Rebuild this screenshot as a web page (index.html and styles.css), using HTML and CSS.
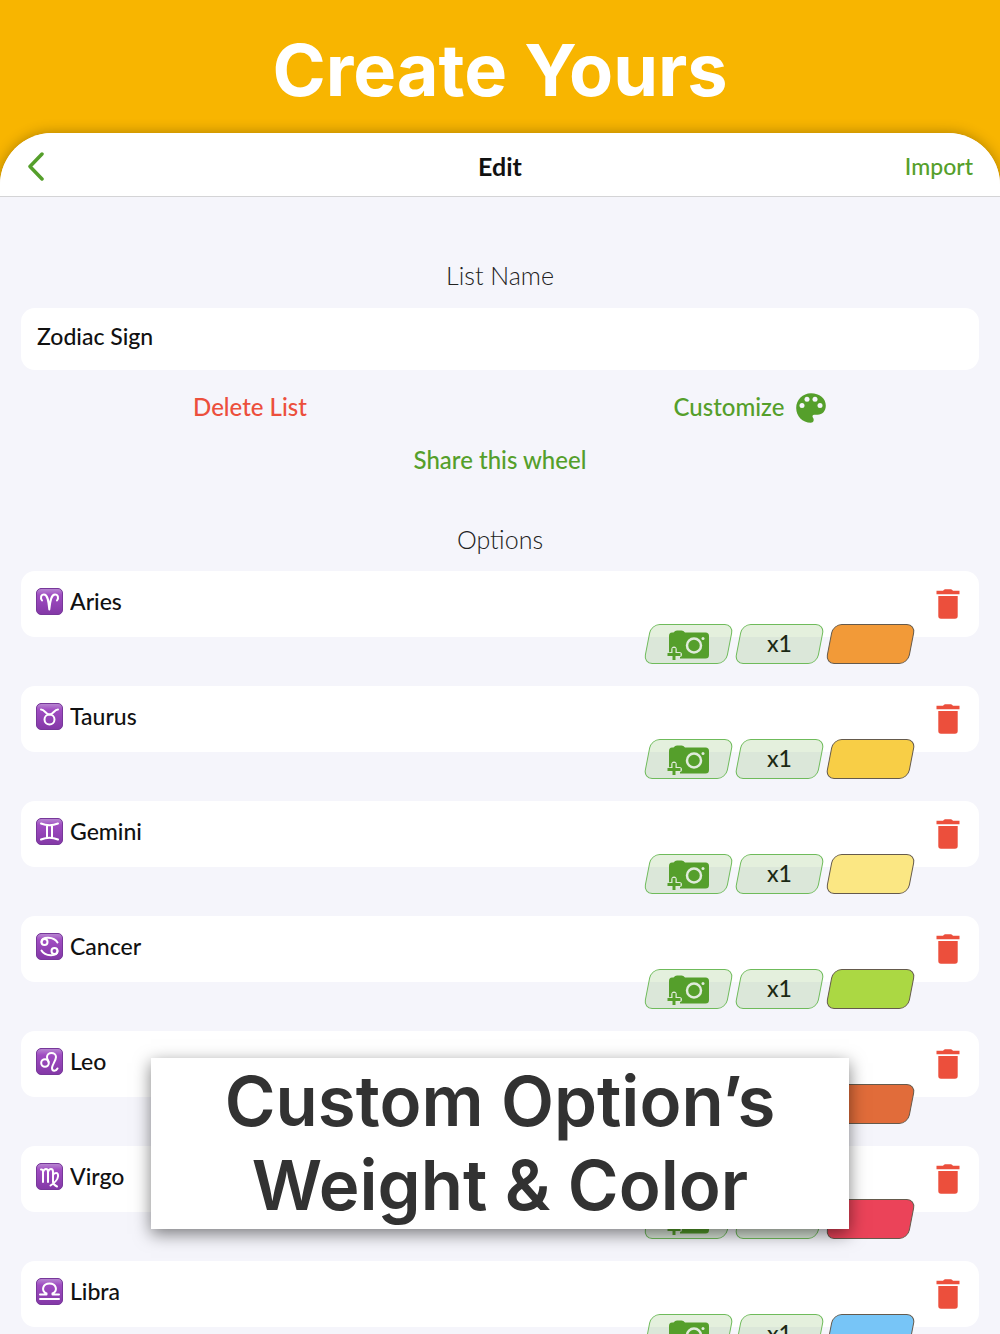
FILE: index.html
```html
<!DOCTYPE html>
<html lang="en">
<head>
    <meta charset="UTF-8">
    <meta name="viewport" content="width=device-width, initial-scale=1.0">
    <title>Edit</title>
    <link rel="stylesheet" href="styles.css">
</head>
<body>
    <!-- shared icons -->
    <svg class="sprite" aria-hidden="true">
        <defs>
            <linearGradient id="purple" x1="0" y1="0" x2="0" y2="1">
                <stop offset="0" stop-color="#b98bd2"/>
                <stop offset="0.25" stop-color="#a04cc2"/>
                <stop offset="1" stop-color="#8338a6"/>
            </linearGradient>
        </defs>
        <symbol id="tile" viewBox="0 0 27 27">
            <rect x="0.5" y="0.5" width="26" height="26" rx="4.5" fill="url(#purple)" stroke="#77389a" stroke-width="1"/>
        </symbol>
        <symbol id="camera" viewBox="0 0 42 30">
            <path fill="#559f2b" d="M5 2.500 H6.500 Q8 .5 10 .5 H14.500 Q16.500 .5 18 2.500 H38.500 Q42 2.500 42 6 V25 Q42 28.500 38.500 28.500 H13 V22.500 H9.500 V18.500 H4.500 V22.500 H2 V6 Q2 2.500 5 2.500Z"/>
            <circle cx="27" cy="15.500" r="7" fill="none" stroke="#e0ebdb" stroke-width="2.500"/>
            <circle cx="36" cy="8.500" r="1.500" fill="#e0ebdb"/>
            <path fill="none" stroke="#e0ebdb" stroke-width="5" stroke-linecap="round" d="M7 19 V27 M4 24.500 H12.500"/>
            <path fill="none" stroke="#559f2b" stroke-width="3" d="M7 18 V30 M0.500 24.500 H13.500"/>
        </symbol>
        <symbol id="trash" viewBox="0 0 24 30">
            <path fill="#ec4f3c" d="M.5 1.800 H7 Q8 .3 9 .3 H15 Q16 .3 17 1.800 H23.500 V5.300 H.5Z M2.300 7 H21.700 V27 Q21.700 29.800 19 29.800 H5 Q2.300 29.800 2.300 27Z"/>
        </symbol>
    </svg>

    <header class="hero">
        <h1>Create Yours</h1>
    </header>

    <main class="screen">
        <nav class="navbar">
            <button class="back" type="button" aria-label="Back">
                <svg width="18" height="30" viewBox="0 0 18 30"><path d="M15 3 L3 15.500 L15 28" fill="none" stroke="#559f2b" stroke-width="3.500" stroke-linecap="round" stroke-linejoin="round"/></svg>
            </button>
            <h2>Edit</h2>
            <button class="import" type="button">Import</button>
        </nav>

        <section class="list-name">
            <label class="section-title" for="listName">List Name</label>
            <input class="name-input" id="listName" type="text" value="Zodiac Sign">
            <div class="actions">
                <button class="delete-list" type="button">Delete List</button>
                <button class="customize" type="button">
                    Customize
                    <svg width="30" height="30" viewBox="0 0 30 30">
                        <path fill="#559f2b" d="M15 .3 C23.500 .3 29.800 5.500 29.800 12.500 C29.800 18 26.500 21.700 21.500 21.700 H18.200 C16.500 21.700 16 23.300 17 24.700 C18.400 26.600 17.700 29.700 14.800 29.700 C6.500 29.700 .2 23.300 .2 15 C.2 6.700 6.800 .3 15 .3Z"/>
                        <g fill="#f5f5fb"><circle cx="6" cy="12.500" r="2.500"/><circle cx="11" cy="6.300" r="2.500"/><circle cx="19" cy="6.300" r="2.500"/><circle cx="24" cy="12.500" r="2.500"/></g>
                    </svg>
                </button>
            </div>
            <button class="share" type="button">Share this wheel</button>
        </section>

        <section>
            <h3 class="section-title">Options</h3>
            <ul class="options">
                <li>
                    <div class="card">
                        <svg class="sign" viewBox="0 0 27 27"><use href="#tile"/><path d="M6 12.500 C4 10 5 6.500 8 6.500 C12 6.500 12.500 14 13.300 21.500 C14 14 15 6.500 19 6.500 C22 6.500 23 10 21 12.500"/></svg>
                        <input type="text" value="Aries" aria-label="Option 1">
                        <button class="trash" type="button" aria-label="Delete Aries"><svg viewBox="0 0 24 30"><use href="#trash"/></svg></button>
                    </div>
                    <div class="tools">
                        <button type="button" aria-label="Add photo"><svg viewBox="0 0 42 30"><use href="#camera"/></svg></button>
                        <button type="button">x1</button>
                        <button class="color orange" type="button" aria-label="Color"></button>
                    </div>
                </li>
                <li>
                    <div class="card">
                        <svg class="sign" viewBox="0 0 27 27"><use href="#tile"/><path d="M5 6.500 C9 6.500 9.500 11.500 13.500 11.500 C17.500 11.500 18 6.500 22 6.500"/><circle cx="13.500" cy="16.500" r="5"/></svg>
                        <input type="text" value="Taurus" aria-label="Option 2">
                        <button class="trash" type="button" aria-label="Delete Taurus"><svg viewBox="0 0 24 30"><use href="#trash"/></svg></button>
                    </div>
                    <div class="tools">
                        <button type="button" aria-label="Add photo"><svg viewBox="0 0 42 30"><use href="#camera"/></svg></button>
                        <button type="button">x1</button>
                        <button class="color yellow" type="button" aria-label="Color"></button>
                    </div>
                </li>
                <li>
                    <div class="card">
                        <svg class="sign" viewBox="0 0 27 27"><use href="#tile"/><path d="M5 5.500 Q13.500 9 22 5.500 M5 21.500 Q13.500 18 22 21.500 M11 7.500 V19.500 M16 7.500 V19.500"/></svg>
                        <input type="text" value="Gemini" aria-label="Option 3">
                        <button class="trash" type="button" aria-label="Delete Gemini"><svg viewBox="0 0 24 30"><use href="#trash"/></svg></button>
                    </div>
                    <div class="tools">
                        <button type="button" aria-label="Add photo"><svg viewBox="0 0 42 30"><use href="#camera"/></svg></button>
                        <button type="button">x1</button>
                        <button class="color cream" type="button" aria-label="Color"></button>
                    </div>
                </li>
                <li>
                    <div class="card">
                        <svg class="sign" viewBox="0 0 27 27"><use href="#tile"/><circle cx="8.500" cy="9" r="3"/><circle cx="18.500" cy="18" r="3"/><path d="M5.500 9 C6 3 18 3.500 21.500 9.500 M21.500 18 C21 24 9 23.500 5.500 17.500"/></svg>
                        <input type="text" value="Cancer" aria-label="Option 4">
                        <button class="trash" type="button" aria-label="Delete Cancer"><svg viewBox="0 0 24 30"><use href="#trash"/></svg></button>
                    </div>
                    <div class="tools">
                        <button type="button" aria-label="Add photo"><svg viewBox="0 0 42 30"><use href="#camera"/></svg></button>
                        <button type="button">x1</button>
                        <button class="color green" type="button" aria-label="Color"></button>
                    </div>
                </li>
                <li>
                    <div class="card">
                        <svg class="sign" viewBox="0 0 27 27"><use href="#tile"/><circle cx="9" cy="15" r="3.800"/><path d="M12.500 14 C12 12 11 11 11 9 C11 3.500 20 3.500 20 9 C20 12.500 16 17 16 20 C16 23.500 20 23.500 21.500 20.500"/></svg>
                        <input type="text" value="Leo" aria-label="Option 5">
                        <button class="trash" type="button" aria-label="Delete Leo"><svg viewBox="0 0 24 30"><use href="#trash"/></svg></button>
                    </div>
                    <div class="tools">
                        <button type="button" aria-label="Add photo"><svg viewBox="0 0 42 30"><use href="#camera"/></svg></button>
                        <button type="button">x1</button>
                        <button class="color rust" type="button" aria-label="Color"></button>
                    </div>
                </li>
                <li>
                    <div class="card">
                        <svg class="sign" viewBox="0 0 27 27"><use href="#tile"/><path d="M5 6.500 Q7 6 7 9 V19 M7 9 Q8 6 10 6 Q12 6 12 9 V19 M12 9 Q13 6 15 6 Q17 6 17 9 V19 Q17 21.500 21 23.500 M17 12 Q18 10 20 10 Q22.500 10 22 13.500 Q21.500 18 14.500 22.500"/></svg>
                        <input type="text" value="Virgo" aria-label="Option 6">
                        <button class="trash" type="button" aria-label="Delete Virgo"><svg viewBox="0 0 24 30"><use href="#trash"/></svg></button>
                    </div>
                    <div class="tools">
                        <button type="button" aria-label="Add photo"><svg viewBox="0 0 42 30"><use href="#camera"/></svg></button>
                        <button type="button">x1</button>
                        <button class="color red" type="button" aria-label="Color"></button>
                    </div>
                </li>
                <li>
                    <div class="card">
                        <svg class="sign" viewBox="0 0 27 27"><use href="#tile"/><path d="M4 21 H23 M4 16.500 H10.500 V15.500 C4.500 12.500 7 5.500 13.500 5.500 C20 5.500 22.500 12.500 16.500 15.500 V16.500 H23"/></svg>
                        <input type="text" value="Libra" aria-label="Option 7">
                        <button class="trash" type="button" aria-label="Delete Libra"><svg viewBox="0 0 24 30"><use href="#trash"/></svg></button>
                    </div>
                    <div class="tools">
                        <button type="button" aria-label="Add photo"><svg viewBox="0 0 42 30"><use href="#camera"/></svg></button>
                        <button type="button">x1</button>
                        <button class="color blue" type="button" aria-label="Color"></button>
                    </div>
                </li>
            </ul>
        </section>
    </main>

    <p class="caption">Custom Option’s<br>Weight &amp; Color</p>
</body>
</html>
```
FILE: styles.css
```css
* {
    box-sizing: border-box;
}
body {
    margin: 0;
    height: 100vh;
    overflow: hidden;
    background-color: #f8b500;
    font-family: Lato, "Open Sans", sans-serif;
    font-size: 23px;
    font-weight: 500;
    color: #111;
}
h1, h2, h3, p, ul {
    margin: 0;
    padding: 0;
}
button {
    padding: 0;
    border: none;
    background: none;
    font: inherit;
    color: #559f2b;
    cursor: pointer;
}
input {
    border: none;
    outline: none;
    background: none;
    font: inherit;
    color: #111;
}
svg {
    display: block;
}
.sprite {
    position: absolute;
    width: 0;
    height: 0;
}

/* top band */
.hero {
    padding: 28px 0 21px;
    text-align: center;
}
.hero h1 {
    font-family: Inter, sans-serif;
    font-size: 72px;
    font-weight: 700;
    line-height: 84px;
    color: white;
}

/* app screen */
.screen {
    background-color: #f5f5fb;
    border-radius: 52px 52px 0 0;
    box-shadow: 0 0 14px rgba(0,0,0,0.3);
}
.navbar {
    display: grid;
    grid-template-columns: 1fr auto 1fr;
    align-items: center;
    height: 64px;
    padding: 3px 27px 0;
    background-color: white;
    border-bottom: 1px solid #d4d4d6;
    border-radius: 52px 52px 0 0;
}
.navbar h2 {
    font-size: 25px;
    font-weight: 700;
}
.back {
    justify-self: start;
}
.import {
    justify-self: end;
}
.section-title {
    display: block;
    font-size: 25px;
    font-weight: 300;
    line-height: 32px;
    text-align: center;
    color: #222;
}
.list-name {
    padding: 62px 21px 0;
}
.name-input {
    display: block;
    width: 100%;
    height: 62px;
    margin-top: 17px;
    padding: 0 16px 6px;
    border-radius: 14px;
    background-color: white;
}
.actions {
    display: grid;
    grid-template-columns: 1fr 1fr;
    align-items: center;
    height: 44px;
    margin: 15px -21px 0;
    font-size: 24px;
}
.delete-list {
    color: #ec4f3c;
}
.delete-list,
.customize {
    padding-bottom: 2px;
}
.customize {
    display: flex;
    justify-content: center;
    align-items: center;
    gap: 12px;
}
.customize svg {
    margin-top: 4px;
}
.share {
    display: block;
    margin: 15px auto 47px;
    font-size: 24px;
    line-height: 32px;
}

/* options */
.options {
    list-style: none;
    margin-top: 16px;
    padding: 0 21px;
}
.options li {
    height: 115px;
}
.card {
    display: flex;
    align-items: center;
    height: 66px;
    padding: 0 19px 0 15px;
    border-radius: 14px;
    background-color: white;
}
.card input {
    flex: 1;
    min-width: 0;
    height: 66px;
    padding: 0 7px 6px;
}
.sign {
    width: 27px;
    height: 27px;
    margin-bottom: 5px;
    fill: none;
    stroke: white;
    stroke-width: 2;
    stroke-linecap: round;
    stroke-linejoin: round;
}
.trash svg {
    width: 24px;
    height: 30px;
}
.tools {
    display: flex;
    justify-content: flex-end;
    gap: 8px;
    margin-top: -13px;
    padding-right: 67px;
}
.tools button {
    position: relative;
    display: flex;
    justify-content: center;
    align-items: center;
    width: 83px;
    height: 40px;
    padding-bottom: 2px;
    color: #111;
}
.tools button::before {
    content: "";
    position: absolute;
    inset: 0;
    border: 1px solid #6fbb5b;
    border-radius: 9px;
    background-color: rgba(85,159,43,0.16);
    transform: skewX(-11deg);
}
.tools svg {
    width: 42px;
    height: 30px;
    margin: 3px 2px 0 0;
    position: relative;
}
.tools .color::before {
    border-color: #655a4c;
}
.tools .orange::before { background-color: #f29a38; }
.tools .yellow::before { background-color: #f8ce46; }
.tools .cream::before { background-color: #fbe783; }
.tools .green::before { background-color: #abd843; }
.tools .rust::before { background-color: #e16c3a; }
.tools .red::before { background-color: #eb4359; }
.tools .blue::before { background-color: #77c5f7; }

/* caption over the list */
.caption {
    position: fixed;
    left: 15%;
    right: 15%;
    bottom: 105px;
    margin: 0 1px;
    padding: 1px 0 2px;
    background-color: white;
    box-shadow: 0 5px 16px rgba(0,0,0,0.5);
    font-family: Inter, sans-serif;
    font-size: 69px;
    font-weight: 600;
    line-height: 84px;
    text-align: center;
    color: #323232;
}
```
